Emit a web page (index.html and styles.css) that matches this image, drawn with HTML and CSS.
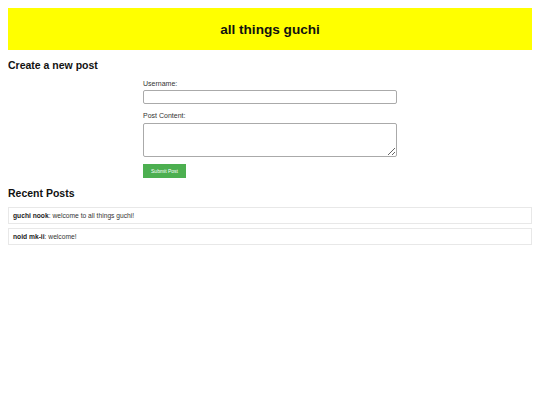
FILE: index.html
```html
<!DOCTYPE html>
<html>
<head>
<meta charset="utf-8">
<link rel="stylesheet" href="styles.css">
</head>
<body>
<header class="banner"><h1 class="title">all things guchi</h1></header>
<h2 class="section-title">Create a new post</h2>
<form class="post-form">
  <label class="field-label">Username:</label>
  <input class="text-input" type="text">
  <label class="field-label">Post Content:</label>
  <textarea class="text-area"></textarea>
  <button class="submit-btn" type="button">Submit Post</button>
</form>
<h2 class="section-title">Recent Posts</h2>
<div class="posts">
  <div class="post"><strong>guchi nook</strong>: welcome to all things guchi!</div>
  <div class="post"><strong>noid mk-ii</strong>: welcome!</div>
</div>
</body>
</html>
```
FILE: styles.css
```css
body {
  margin: 8px;
  font-family: "Liberation Sans", Arial, sans-serif;
  color: #000;
  background: #fff;
}
.banner {
  background: #ffff00;
  height: 42px;
  display: flex;
  align-items: center;
  justify-content: center;
}
.title {
  margin: 0;
  font-size: 13.6px;
  font-weight: bold;
  color: #111;
}
.section-title {
  margin: 9px 0 8px;
  font-size: 10.5px;
  font-weight: bold;
  line-height: 12px;
  color: #111;
}
.post-form {
  width: 254px;
  margin: 0 auto;
  display: flex;
  flex-direction: column;
  align-items: flex-start;
}
.field-label {
  font-size: 7px;
  line-height: 9px;
  color: #333;
  margin-bottom: 2px;
}
.text-input {
  box-sizing: border-box;
  width: 254px;
  height: 14px;
  border: 1px solid #aaa;
  border-radius: 2px;
  padding: 0;
  margin: 0 0 7px;
}
.text-area {
  box-sizing: border-box;
  width: 254px;
  height: 34px;
  border: 1px solid #aaa;
  border-radius: 2px;
  padding: 0;
  margin: 1px 0 7px;
  resize: vertical;
}
.submit-btn {
  width: 43px;
  height: 14px;
  background: #4caf50;
  color: #fff;
  border: none;
  font-family: "Liberation Sans", Arial, sans-serif;
  font-size: 5px;
  padding: 0;
}
.posts {
  display: flex;
  flex-direction: column;
  gap: 4px;
}
.post {
  box-sizing: border-box;
  height: 17px;
  border: 1px solid #e8e8e8;
  padding: 0 4px;
  display: flex;
  align-items: center;
  font-size: 6.7px;
  color: #333;
  white-space: pre;
}
.post strong {
  color: #222;
}
```
